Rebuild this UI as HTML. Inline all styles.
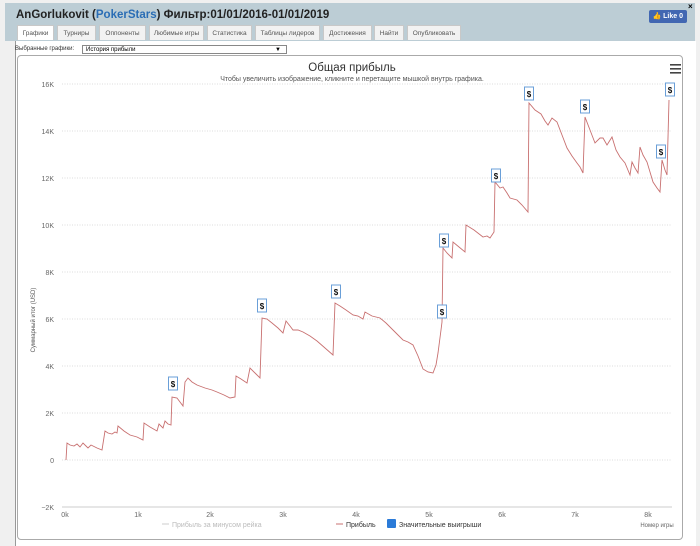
<!DOCTYPE html>
<html><head><meta charset="utf-8"><style>
body{margin:0;width:700px;height:546px;background:#f0f0f0;font-family:"Liberation Sans",sans-serif;position:relative;overflow:hidden}
.hdr{position:absolute;left:5px;top:3px;width:690px;height:38px;background:#bccdd5}
.title{position:absolute;left:16px;top:9px;font-size:11.5px;font-weight:bold;color:#222}
.title span{color:#2a6db5}
.tab{position:absolute;top:25px;height:15px;background:#f2f2f2;border:1px solid #c8c8c8;border-bottom:none;font-size:6.5px;color:#555;text-align:center;line-height:15px;box-sizing:border-box}
.tab.a{background:#fff}
.main{position:absolute;left:15px;top:41px;width:680px;height:505px;background:#fff;border-left:1px solid #999}
.fb{position:absolute;left:649px;top:10px;width:38px;height:13px;background:#4267b2;border-radius:2px;color:#fff;font-size:7px;font-weight:bold;line-height:13px;text-align:right;padding-right:4px;box-sizing:border-box}
.x{position:absolute;left:688px;top:2px;font-size:8px;font-weight:bold}
.sel{position:absolute;left:15px;top:46px;font-size:6px;color:#333}
.box{position:absolute;left:82px;top:45px;width:205px;height:9px;border:1px solid #888;font-size:6px;line-height:9px;padding-left:3px;box-sizing:border-box}
.chart{position:absolute;left:17px;top:55px;width:666px;height:485px;border:1px solid #aaa;border-radius:4px;box-sizing:border-box}
svg{position:absolute;left:0;top:0}
</style></head><body>
<div class="hdr"></div>
<div class="title">AnGorlukovit (<span>PokerStars</span>) Фильтр:01/01/2016-01/01/2019</div>
<div class="fb">👍 Like 0</div><div class="x">×</div>
<div class="main"></div>
<div class="tab a" style="left:17px;width:37px">Графики</div>
<div class="tab" style="left:57px;width:39px">Турниры</div>
<div class="tab" style="left:99px;width:47px">Оппоненты</div>
<div class="tab" style="left:149px;width:55px">Любимые игры</div>
<div class="tab" style="left:207px;width:45px">Статистика</div>
<div class="tab" style="left:255px;width:65px">Таблицы лидеров</div>
<div class="tab" style="left:323px;width:49px">Достижения</div>
<div class="tab" style="left:374px;width:30px">Найти</div>
<div class="tab" style="left:407px;width:54px">Опубликовать</div>
<div class="sel">Выбранные графики:</div>
<div class="box">История прибыли<span style="position:absolute;right:5px">▼</span></div>
<div class="chart"></div>
<svg width="700" height="546" font-family="Liberation Sans, sans-serif">
<text x="352" y="71" font-size="11.5" fill="#333" text-anchor="middle">Общая прибыль</text>
<text x="352" y="81" font-size="7" fill="#555" text-anchor="middle">Чтобы увеличить изображение, кликните и перетащите мышкой внутрь графика.</text>
<g fill="#444"><rect x="670" y="64" width="11" height="1.6"/><rect x="670" y="68" width="11" height="1.6"/><rect x="670" y="72" width="11" height="1.6"/></g>
<g stroke="#ddd" stroke-dasharray="1,1.5" stroke-width="1">
<line x1="62" x2="672" y1="84" y2="84"/><line x1="62" x2="672" y1="131" y2="131"/><line x1="62" x2="672" y1="178" y2="178"/><line x1="62" x2="672" y1="225" y2="225"/><line x1="62" x2="672" y1="272" y2="272"/><line x1="62" x2="672" y1="319" y2="319"/><line x1="62" x2="672" y1="366" y2="366"/><line x1="62" x2="672" y1="413" y2="413"/><line x1="62" x2="672" y1="460" y2="460"/></g>
<line x1="62" x2="672" y1="507" y2="507" stroke="#ccc"/>
<g font-size="7" fill="#666" text-anchor="end">
<text x="54" y="87">16K</text><text x="54" y="134">14K</text><text x="54" y="181">12K</text><text x="54" y="228">10K</text><text x="54" y="275">8K</text><text x="54" y="322">6K</text><text x="54" y="369">4K</text><text x="54" y="416">2K</text><text x="54" y="463">0</text><text x="54" y="510">−2K</text></g>
<g font-size="7" fill="#666" text-anchor="middle">
<text x="65" y="517">0k</text><text x="138" y="517">1k</text><text x="210" y="517">2k</text><text x="283" y="517">3k</text><text x="356" y="517">4k</text><text x="429" y="517">5k</text><text x="502" y="517">6k</text><text x="575" y="517">7k</text><text x="648" y="517">8k</text></g>
<text transform="translate(35,320) rotate(-90)" font-size="6" fill="#555" text-anchor="middle">Суммарный итог (USD)</text>
<text x="657" y="527" font-size="6" fill="#666" text-anchor="middle">Номер игры</text>
<g font-size="7"><line x1="162" x2="169" y1="524" y2="524" stroke="#ccc"/><text x="172" y="527" fill="#bbb">Прибыль за минусом рейка</text>
<line x1="336" x2="343" y1="524" y2="524" stroke="#c87070"/><text x="346" y="527" fill="#333">Прибыль</text>
<rect x="387" y="519" width="9" height="9" fill="#2b7bd8" rx="1"/><text x="399" y="527" fill="#333">Значительные выигрыши</text></g>
<polyline fill="none" stroke="#c87070" stroke-width="0.9" points="66,460 67,443 70,445 74,446 77,444 80,447 83,443 86,446 88,448 91,445 93,446 97,448 102,450 105,431 108,433 112,434 115,432 117,433 118,426 124,431 130,435 137,437 143,440 144,423 150,427 157,431 159,424 163,428 165,421 168,424 171,425 172,397 177,398 180,402 183,406 185,382 188,378 192,382 197,385 205,388 212,390 217,392 224,395 230,398 235,397 236,376 241,379 247,383 250,368 255,373 260,378 262,318 267,319 272,323 278,328 283,333 286,321 290,326 293,330 298,330 303,332 310,336 317,341 325,348 333,355 335,303 340,306 346,310 353,315 358,316 363,319 365,312 372,316 380,318 386,323 393,330 398,335 403,340 408,342 413,345 418,356 423,369 428,372 433,373 436,365 438,353 441,330 442,322 443,248 447,253 452,258 453,242 459,247 465,252 466,225 474,230 483,237 487,236 490,238 494,232 495,182 500,188 503,187 507,193 510,198 517,200 522,205 528,212 529,103 535,110 541,114 545,121 548,125 552,118 557,122 562,135 567,148 572,156 577,163 580,167 583,173 585,117 590,130 595,143 600,138 603,138 607,145 612,137 616,150 620,157 625,163 630,175 632,162 635,168 638,173 640,147 643,155 647,162 650,172 653,182 657,188 660,192 662,160 665,170 667,175 669,100"/>
<g font-size="8" font-weight="bold" fill="#111" text-anchor="middle">
<g transform="translate(173,384)"><rect x="-4.5" y="-7" width="9" height="13" fill="#fff" stroke="#6a9fd8"/><text y="3">$</text></g>
<g transform="translate(262,306)"><rect x="-4.5" y="-7" width="9" height="13" fill="#fff" stroke="#6a9fd8"/><text y="3">$</text></g>
<g transform="translate(336,292)"><rect x="-4.5" y="-7" width="9" height="13" fill="#fff" stroke="#6a9fd8"/><text y="3">$</text></g>
<g transform="translate(442,312)"><rect x="-4.5" y="-7" width="9" height="13" fill="#fff" stroke="#6a9fd8"/><text y="3">$</text></g>
<g transform="translate(444,241)"><rect x="-4.5" y="-7" width="9" height="13" fill="#fff" stroke="#6a9fd8"/><text y="3">$</text></g>
<g transform="translate(496,176)"><rect x="-4.5" y="-7" width="9" height="13" fill="#fff" stroke="#6a9fd8"/><text y="3">$</text></g>
<g transform="translate(529,94)"><rect x="-4.5" y="-7" width="9" height="13" fill="#fff" stroke="#6a9fd8"/><text y="3">$</text></g>
<g transform="translate(585,107)"><rect x="-4.5" y="-7" width="9" height="13" fill="#fff" stroke="#6a9fd8"/><text y="3">$</text></g>
<g transform="translate(661,152)"><rect x="-4.5" y="-7" width="9" height="13" fill="#fff" stroke="#6a9fd8"/><text y="3">$</text></g>
<g transform="translate(670,90)"><rect x="-4.5" y="-7" width="9" height="13" fill="#fff" stroke="#6a9fd8"/><text y="3">$</text></g>
</g>
</svg>
</body></html>
